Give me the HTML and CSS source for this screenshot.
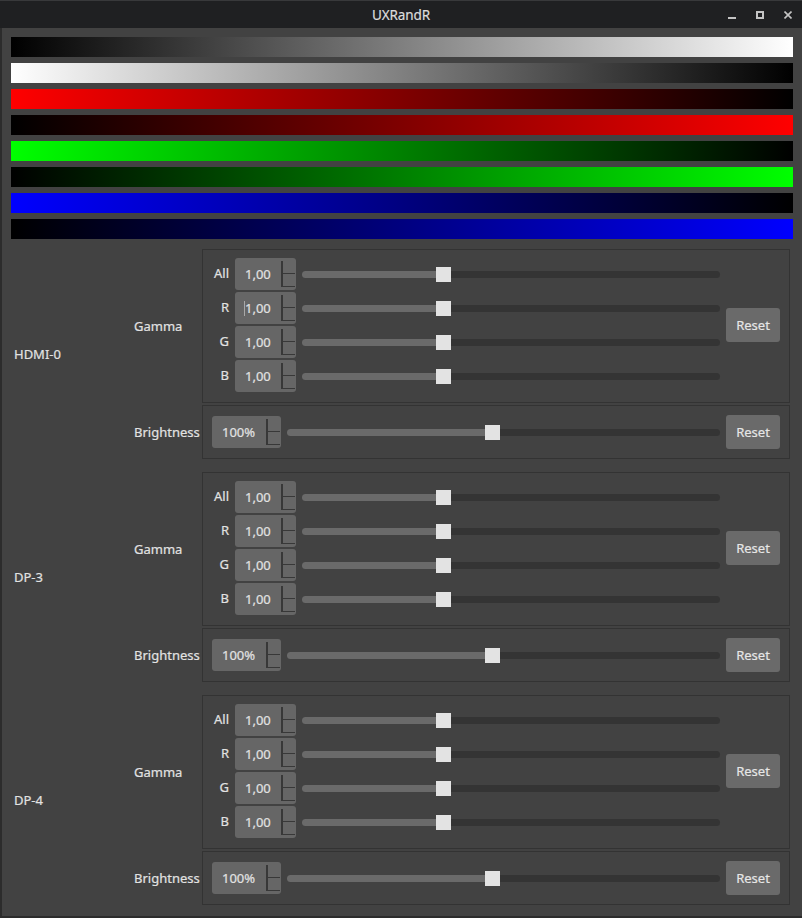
FILE: index.html
```html
<!DOCTYPE html>
<html>
<head>
<meta charset="utf-8">
<title>UXRandR</title>
<link rel="stylesheet" href="styles.css">
</head>
<body>
<div class="window">
  <div class="titlebar">
    <span class="title">UXRandR</span>
    <div class="controls">
      <svg width="8" height="8" viewBox="0 0 8 8"><rect x="0" y="6" width="8" height="2" fill="#c4c4c4"/></svg>
      <svg width="8" height="8" viewBox="0 0 8 8"><rect x="1" y="1" width="6" height="6" fill="none" stroke="#c4c4c4" stroke-width="2"/></svg>
      <svg width="8" height="8" viewBox="0 0 8 8"><path d="M0.5 0.5 L7.5 7.5 M7.5 0.5 L0.5 7.5" stroke="#c4c4c4" stroke-width="1.6"/></svg>
    </div>
  </div>
  <div class="main">
    <div class="bars">
      <div class="bar k-w"></div>
      <div class="bar w-k"></div>
      <div class="bar r-k"></div>
      <div class="bar k-r"></div>
      <div class="bar g-k"></div>
      <div class="bar k-g"></div>
      <div class="bar b-k"></div>
      <div class="bar k-b"></div>
    </div>

    <div class="outputs">
      <!-- HDMI-0 -->
      <div class="output">
        <div class="out-name">HDMI-0</div>
        <div class="groups">
          <div class="group">
            <div class="sub">Gamma</div>
            <div class="frame gamma">
              <div class="channels">
                <div class="chan"><span class="chan-label">All</span><div class="spin"><span class="val">1,00</span><span class="btns"><span></span><span></span></span></div><div class="slider"><div class="fill" style="--v:0.3333"></div><div class="handle"></div><div class="rest"></div></div></div>
                <div class="chan"><span class="chan-label">R</span><div class="spin"><span class="val"><i class="caret"></i>1,00</span><span class="btns"><span></span><span></span></span></div><div class="slider"><div class="fill" style="--v:0.3333"></div><div class="handle"></div><div class="rest"></div></div></div>
                <div class="chan"><span class="chan-label">G</span><div class="spin"><span class="val">1,00</span><span class="btns"><span></span><span></span></span></div><div class="slider"><div class="fill" style="--v:0.3333"></div><div class="handle"></div><div class="rest"></div></div></div>
                <div class="chan"><span class="chan-label">B</span><div class="spin"><span class="val">1,00</span><span class="btns"><span></span><span></span></span></div><div class="slider"><div class="fill" style="--v:0.3333"></div><div class="handle"></div><div class="rest"></div></div></div>
              </div>
              <button class="reset">Reset</button>
            </div>
          </div>
          <div class="group">
            <div class="sub">Brightness</div>
            <div class="frame bright">
              <div class="spin wide"><span class="val">100%</span><span class="btns"><span></span><span></span></span></div>
              <div class="slider"><div class="fill" style="--v:0.4737"></div><div class="handle"></div><div class="rest"></div></div>
              <button class="reset">Reset</button>
            </div>
          </div>
        </div>
      </div>

      <!-- DP-3 -->
      <div class="output">
        <div class="out-name">DP-3</div>
        <div class="groups">
          <div class="group">
            <div class="sub">Gamma</div>
            <div class="frame gamma">
              <div class="channels">
                <div class="chan"><span class="chan-label">All</span><div class="spin"><span class="val">1,00</span><span class="btns"><span></span><span></span></span></div><div class="slider"><div class="fill" style="--v:0.3333"></div><div class="handle"></div><div class="rest"></div></div></div>
                <div class="chan"><span class="chan-label">R</span><div class="spin"><span class="val">1,00</span><span class="btns"><span></span><span></span></span></div><div class="slider"><div class="fill" style="--v:0.3333"></div><div class="handle"></div><div class="rest"></div></div></div>
                <div class="chan"><span class="chan-label">G</span><div class="spin"><span class="val">1,00</span><span class="btns"><span></span><span></span></span></div><div class="slider"><div class="fill" style="--v:0.3333"></div><div class="handle"></div><div class="rest"></div></div></div>
                <div class="chan"><span class="chan-label">B</span><div class="spin"><span class="val">1,00</span><span class="btns"><span></span><span></span></span></div><div class="slider"><div class="fill" style="--v:0.3333"></div><div class="handle"></div><div class="rest"></div></div></div>
              </div>
              <button class="reset">Reset</button>
            </div>
          </div>
          <div class="group">
            <div class="sub">Brightness</div>
            <div class="frame bright">
              <div class="spin wide"><span class="val">100%</span><span class="btns"><span></span><span></span></span></div>
              <div class="slider"><div class="fill" style="--v:0.4737"></div><div class="handle"></div><div class="rest"></div></div>
              <button class="reset">Reset</button>
            </div>
          </div>
        </div>
      </div>

      <!-- DP-4 -->
      <div class="output">
        <div class="out-name">DP-4</div>
        <div class="groups">
          <div class="group">
            <div class="sub">Gamma</div>
            <div class="frame gamma">
              <div class="channels">
                <div class="chan"><span class="chan-label">All</span><div class="spin"><span class="val">1,00</span><span class="btns"><span></span><span></span></span></div><div class="slider"><div class="fill" style="--v:0.3333"></div><div class="handle"></div><div class="rest"></div></div></div>
                <div class="chan"><span class="chan-label">R</span><div class="spin"><span class="val">1,00</span><span class="btns"><span></span><span></span></span></div><div class="slider"><div class="fill" style="--v:0.3333"></div><div class="handle"></div><div class="rest"></div></div></div>
                <div class="chan"><span class="chan-label">G</span><div class="spin"><span class="val">1,00</span><span class="btns"><span></span><span></span></span></div><div class="slider"><div class="fill" style="--v:0.3333"></div><div class="handle"></div><div class="rest"></div></div></div>
                <div class="chan"><span class="chan-label">B</span><div class="spin"><span class="val">1,00</span><span class="btns"><span></span><span></span></span></div><div class="slider"><div class="fill" style="--v:0.3333"></div><div class="handle"></div><div class="rest"></div></div></div>
              </div>
              <button class="reset">Reset</button>
            </div>
          </div>
          <div class="group">
            <div class="sub">Brightness</div>
            <div class="frame bright">
              <div class="spin wide"><span class="val">100%</span><span class="btns"><span></span><span></span></span></div>
              <div class="slider"><div class="fill" style="--v:0.4737"></div><div class="handle"></div><div class="rest"></div></div>
              <button class="reset">Reset</button>
            </div>
          </div>
        </div>
      </div>
    </div>
  </div>
</div>
</body>
</html>
```

FILE: styles.css
```css
* { box-sizing: border-box; }

html, body {
  margin: 0;
  padding: 0;
  background: #424242;
}

body {
  font-family: "Noto Sans", "DejaVu Sans", sans-serif;
  font-size: 13px;
  color: #e2e2e2;
  -webkit-text-stroke: 0.2px currentColor;
}

.window {
  width: 802px;
  height: 918px;
  display: flex;
  flex-direction: column;
  background: #424242;
  overflow: hidden;
}

.titlebar {
  height: 28px;
  flex-shrink: 0;
  background: #1f2022;
  border-top: 1px solid #38393b;
  display: grid;
  grid-template-columns: 1fr auto 1fr;
  align-items: center;
}

.title {
  grid-column: 2;
  color: #dcdcdc;
  font-size: 13.5px;
  letter-spacing: -0.1px;
}

.controls {
  grid-column: 3;
  justify-self: end;
  display: flex;
  gap: 20px;
  margin-right: 10px;
}

.controls svg { display: block; }

.main {
  flex: 1;
  border-left: 2px solid #2c2c2c;
  border-bottom: 2px solid #2c2c2c;
  padding: 9px 9px 0 9px;
}

.bars {
  display: flex;
  flex-direction: column;
  gap: 6px;
}

.bar { height: 20px; }
.k-w { background: linear-gradient(to right, #000, #fff); }
.w-k { background: linear-gradient(to right, #fff, #000); }
.r-k { background: linear-gradient(to right, #f00, #000); }
.k-r { background: linear-gradient(to right, #000, #f00); }
.g-k { background: linear-gradient(to right, #0f0, #000); }
.k-g { background: linear-gradient(to right, #000, #0f0); }
.b-k { background: linear-gradient(to right, #00f, #000); }
.k-b { background: linear-gradient(to right, #000, #00f); }

.outputs {
  margin-top: 10px;
  display: flex;
  flex-direction: column;
  gap: 13px;
}

.output { display: flex; }

.out-name {
  width: 123px;
  padding-left: 3px;
  align-self: center;
}

.groups {
  display: flex;
  flex-direction: column;
  gap: 2px;
}

.group {
  display: flex;
  align-items: center;
}

.sub { width: 68px; }

.frame {
  width: 588px;
  border: 1px solid #333333;
  display: flex;
  align-items: center;
  gap: 6px;
}

.frame.gamma { padding: 8px 9px 10px 6px; }
.frame.bright { padding: 9px; }

.channels {
  flex: 1;
  display: flex;
  flex-direction: column;
  gap: 2px;
}

.chan {
  display: flex;
  align-items: center;
  gap: 6px;
  height: 32px;
}

.chan-label {
  width: 20px;
  text-align: right;
  padding-bottom: 3px;
}

.spin {
  width: 61px;
  height: 32px;
  flex-shrink: 0;
  background: #666666;
  border-radius: 3px;
  display: flex;
  align-items: center;
  padding-left: 10px;
}

.spin.wide { width: 69px; }

.spin .val {
  flex: 1;
  display: flex;
  align-items: center;
}

.caret {
  display: block;
  width: 1px;
  height: 15px;
  background: #a8a8a8;
  margin-left: -1px;
}

.spin .btns {
  width: 14px;
  align-self: stretch;
  margin: 3px 1px 3px 0;
  border-left: 2px solid #383838;
  display: flex;
  flex-direction: column;
}

.spin .btns span {
  flex: 1;
  border-bottom: 1px solid #383838;
}

.slider {
  flex: 1;
  height: 15px;
  display: flex;
  align-items: center;
}

.fill {
  flex-shrink: 0;
  width: calc((100% - 15px) * var(--v));
  height: 7px;
  background: #6a6a6a;
  border-radius: 4px 0 0 4px;
}

.handle {
  flex-shrink: 0;
  width: 15px;
  height: 15px;
  background: #e3e3e3;
}

.rest {
  flex: 1;
  height: 7px;
  background: #343434;
  border-radius: 0 4px 4px 0;
}

.reset {
  width: 54px;
  height: 34px;
  flex-shrink: 0;
  padding: 0;
  border: none;
  border-radius: 3px;
  background: #6a6a6a;
  color: #e6e6e6;
  font: inherit;
}
```
